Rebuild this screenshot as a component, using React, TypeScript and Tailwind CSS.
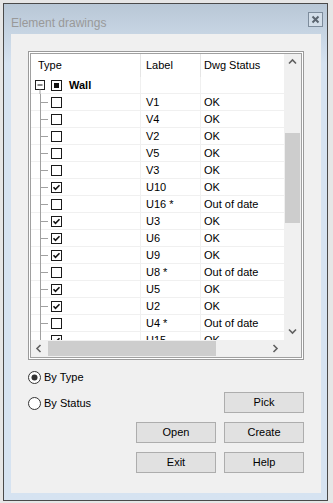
import React from 'react';

type Row = { label: string; status: string; checked: boolean };

const rows: Row[] = [
  { label: 'V1', status: 'OK', checked: false },
  { label: 'V4', status: 'OK', checked: false },
  { label: 'V2', status: 'OK', checked: false },
  { label: 'V5', status: 'OK', checked: false },
  { label: 'V3', status: 'OK', checked: false },
  { label: 'U10', status: 'OK', checked: true },
  { label: 'U16 *', status: 'Out of date', checked: false },
  { label: 'U3', status: 'OK', checked: true },
  { label: 'U6', status: 'OK', checked: true },
  { label: 'U9', status: 'OK', checked: true },
  { label: 'U8 *', status: 'Out of date', checked: false },
  { label: 'U5', status: 'OK', checked: true },
  { label: 'U2', status: 'OK', checked: true },
  { label: 'U4 *', status: 'Out of date', checked: false },
  { label: 'U15', status: 'OK', checked: true },
];

function CheckBox({ state }: { state: 'off' | 'on' | 'mixed' }) {
  return (
    <svg width="11" height="11" viewBox="0 0 11 11" className="shrink-0">
      <rect x="0.5" y="0.5" width="10" height="10" fill="#fff" stroke="#1a1a1a" />
      {state === 'on' && (
        <path d="M2.5 5.2 L4.5 7.3 L8.5 3.2" fill="none" stroke="#111" strokeWidth="1.6" />
      )}
      {state === 'mixed' && <rect x="3" y="3" width="5" height="5" fill="#111" />}
    </svg>
  );
}

function Chevron({ dir }: { dir: 'up' | 'down' | 'left' | 'right' }) {
  const pts = {
    up: '1,5.5 4.5,2 8,5.5',
    down: '1,2.5 4.5,6 8,2.5',
    left: '5.5,1 2,4.5 5.5,8',
    right: '2.5,1 6,4.5 2.5,8',
  }[dir];
  return (
    <svg width="9" height="9" viewBox="0 0 9 9">
      <polyline points={pts} fill="none" stroke="#606060" strokeWidth="1.6" />
    </svg>
  );
}

function Radio({ on, label }: { on: boolean; label: string }) {
  return (
    <div className="flex items-center h-[13px]">
      <svg width="13" height="13" viewBox="0 0 13 13" className="shrink-0">
        <circle cx="6.5" cy="6.5" r="6" fill="#fff" stroke="#333" />
        {on && <circle cx="6.5" cy="6.5" r="3" fill="#333" />}
      </svg>
      <span className="ml-[3px] text-[11px] leading-[13px] text-black">{label}</span>
    </div>
  );
}

function Btn({ label, className = '' }: { label: string; className?: string }) {
  return (
    <div
      className={`h-[21px] w-[80px] bg-[#e1e1e1] border border-[#adadad] flex items-center justify-center text-[11px] text-black ${className}`}
    >
      {label}
    </div>
  );
}

export default function App() {
  return (
    <div
      className="w-[333px] h-[503px] bg-[#e6e6e6] pt-[3px] pl-[3px] overflow-hidden"
      style={{ fontFamily: '"Liberation Sans", Arial, sans-serif' }}
    >
      {/* window */}
      <div className="w-[325px] h-[498px] border border-[#4a4a4a] bg-linear-to-b from-[#b8c7d6] to-[#d6e3f1] to-[12%] flex flex-col">
        {/* title bar */}
        <div className="h-[30px] flex items-start justify-between shrink-0">
          <div className="pl-[7px] pt-[12px] text-[12px] leading-[14px] text-[#999]">Element drawings</div>
          <div className="mt-[8px] mr-[4px] w-[15px] h-[15px] border border-[#7d8c9c] bg-[#d3dee9] flex items-center justify-center">
            <svg width="9" height="9" viewBox="0 0 9 9">
              <path d="M1.5 1.5 L7.5 7.5 M7.5 1.5 L1.5 7.5" stroke="#5b6570" strokeWidth="2" />
            </svg>
          </div>
        </div>

        {/* client */}
        <div className="ml-[7px] w-[310px] h-[459px] bg-[#f0f0f0] pt-[17px] pl-[17px] flex flex-col">
          {/* list */}
          <div className="w-[276px] h-[309px] border border-[#9a9a9a] bg-white p-px">
            <div className="w-full h-full border border-[#a0a0a0] flex flex-col">
              <div className="flex flex-1 min-h-0">
                <div className="flex-1 min-w-0 overflow-hidden bg-white text-[11px] text-black">
                  {/* header */}
                  <div className="h-[23px] flex items-center">
                    <div className="w-[110px] shrink-0 h-full pl-[7px] flex items-center border-r border-[#e5e5e5]">Type</div>
                    <div className="w-[60px] shrink-0 h-full pl-[5px] flex items-center border-r border-[#e5e5e5]">Label</div>
                    <div className="w-[120px] shrink-0 h-full pl-[3px] flex items-center whitespace-nowrap">Dwg Status</div>
                  </div>
                  {/* group row */}
                  <div className="h-[17px] flex border-b border-[#f0f0f0]">
                    <div className="w-[110px] shrink-0 flex items-center border-r border-[#f0f0f0]">
                      <svg width="20" height="17" viewBox="0 0 20 17" className="shrink-0 self-start">
                        <rect x="4.5" y="3.5" width="9" height="9" fill="#fff" stroke="#222" />
                        <path d="M6.5 8 H11.5" stroke="#111" />
                        <path d="M9 12.5 V17" stroke="#a0a0a0" />
                      </svg>
                      <CheckBox state="mixed" />
                      <span className="ml-[7px] font-bold">Wall</span>
                    </div>
                    <div className="w-[60px] shrink-0 border-r border-[#f0f0f0]" />
                    <div className="w-[120px] shrink-0" />
                  </div>
                  {rows.map((r) => (
                    <div key={r.label} className="h-[17px] flex border-b border-[#f0f0f0]">
                      <div className="w-[110px] shrink-0 flex items-center border-r border-[#f0f0f0]">
                        <svg width="20" height="17" viewBox="0 0 20 17" className="shrink-0 self-start">
                          <path d="M9.5 -1 V18 M9.5 8.5 H17" stroke="#a0a0a0" />
                        </svg>
                        <CheckBox state={r.checked ? 'on' : 'off'} />
                      </div>
                      <div className="w-[60px] shrink-0 pl-[5px] flex items-center border-r border-[#f0f0f0]">{r.label}</div>
                      <div className="w-[120px] shrink-0 pl-[3px] flex items-center whitespace-nowrap">{r.status}</div>
                    </div>
                  ))}
                </div>
                {/* vertical scrollbar */}
                <div className="w-[17px] bg-[#f0f0f0] flex flex-col shrink-0">
                  <div className="h-[17px] flex items-center justify-center"><Chevron dir="up" /></div>
                  <div className="flex-1 pt-[62px]">
                    <div className="mx-px h-[90px] bg-[#cdcdcd]" />
                  </div>
                  <div className="h-[17px] flex items-center justify-center"><Chevron dir="down" /></div>
                </div>
              </div>
              {/* horizontal scrollbar */}
              <div className="h-[17px] flex shrink-0">
                <div className="flex-1 bg-[#f0f0f0] flex">
                  <div className="w-[17px] flex items-center justify-center"><Chevron dir="left" /></div>
                  <div className="flex-1 py-px">
                    <div className="w-[168px] h-full bg-[#cdcdcd]" />
                  </div>
                  <div className="w-[17px] flex items-center justify-center"><Chevron dir="right" /></div>
                </div>
                <div className="w-[17px] bg-[#f0f0f0]" />
              </div>
            </div>
          </div>

          {/* options + buttons */}
          <div className="flex items-start mt-[11px]">
            <div className="w-[108px] flex flex-col gap-[13px]">
              <Radio on label="By Type" />
              <Radio on={false} label="By Status" />
            </div>
            <div className="mt-[21px] grid grid-cols-[80px_80px] gap-x-[8px] gap-y-[9px]">
              <Btn label="Pick" className="col-start-2" />
              <Btn label="Open" />
              <Btn label="Create" />
              <Btn label="Exit" />
              <Btn label="Help" />
            </div>
          </div>
        </div>
      </div>
    </div>
  );
}
